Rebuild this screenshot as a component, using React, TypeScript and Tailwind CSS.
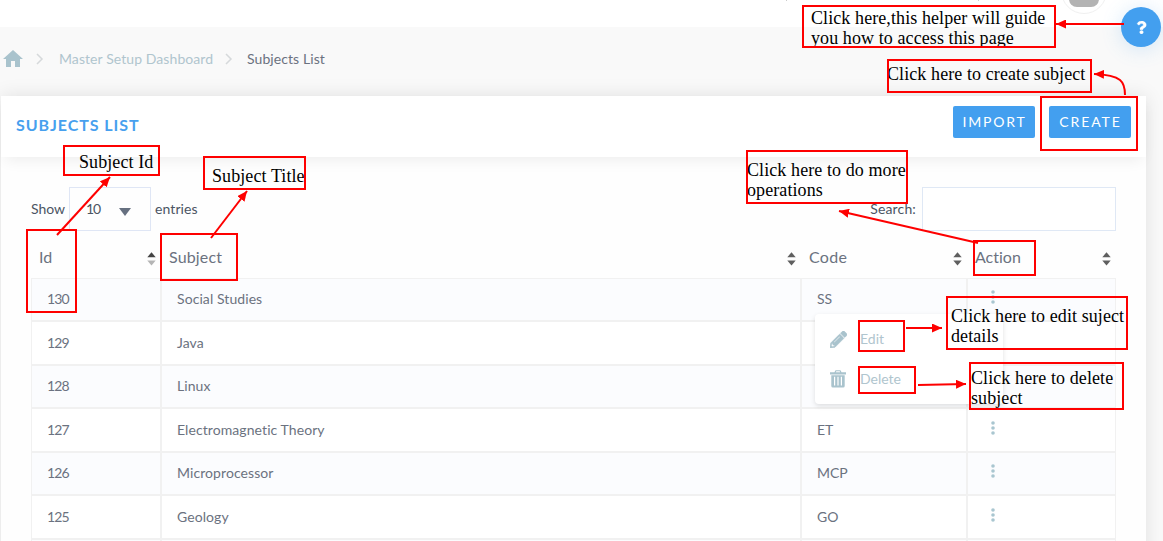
import React from "react";
import { MdHome } from "react-icons/md";
import { FaPencilAlt, FaQuestion } from "react-icons/fa";

type Subject = { id: string; title: string; code: string };

const subjects: Subject[] = [
  { id: "130", title: "Social Studies", code: "SS" },
  { id: "129", title: "Java", code: "" },
  { id: "128", title: "Linux", code: "" },
  { id: "127", title: "Electromagnetic Theory", code: "ET" },
  { id: "126", title: "Microprocessor", code: "MCP" },
  { id: "125", title: "Geology", code: "GO" },
  { id: "", title: "", code: "" },
];

const columns = "grid grid-cols-[130px_640px_166px_149px]";

function Chevron() {
  return (
    <svg width="8" height="12" viewBox="0 0 8 12" fill="none" stroke="#d6d9db" strokeWidth="1.5">
      <path d="M1 1l5 5-5 5" />
    </svg>
  );
}

function Sort({ up = "#5f5f5f", down = "#5f5f5f" }: { up?: string; down?: string }) {
  return (
    <svg width="9" height="14" viewBox="0 0 9 14" className="mt-[3px]">
      <path d="M0.300 5.200L4.500 0.300l4.200 4.900z" fill={up} />
      <path d="M0.300 8.600h8.400L4.500 13.500z" fill={down} />
    </svg>
  );
}

function Trash() {
  return (
    <svg width="16" height="18" viewBox="0 0 16 18" fill="#a9c3cd">
      <path d="M0 2.200h4.500L5.300.6Q5.600.2 6 .2h4q.4 0 .7.4l.8 1.600H16V4.500H0zM5.800 2.200h4.400l-.5-.9H6.300z" fillRule="evenodd" />
      <path
        d="M1.300 5.200h13.400V16q0 1.600-1.600 1.600H2.900Q1.300 17.600 1.300 16zM4 6.800v8.800h1.200V6.800zM7.400 6.800v8.800h1.200V6.800zM10.800 6.800v8.800H12V6.800z"
        fillRule="evenodd"
      />
    </svg>
  );
}

function Dots() {
  return (
    <svg width="4" height="14" viewBox="0 0 4 14" fill="#a9c6d0">
      <circle cx="2" cy="2" r="1.800" />
      <circle cx="2" cy="7" r="1.800" />
      <circle cx="2" cy="12" r="1.800" />
    </svg>
  );
}

function Note({ className, children }: { className: string; children?: React.ReactNode }) {
  return (
    <div
      className={`absolute overflow-hidden whitespace-nowrap border-2 border-[#fe0000] font-['Liberation_Serif',serif] text-[18px] leading-5 tracking-[0.09px] text-black ${className}`}
    >
      {children}
    </div>
  );
}

export default function App() {
  return (
    <div className="relative h-[541px] w-[1163px] overflow-hidden bg-[#f9f9f9] font-['Lato',sans-serif] text-sm text-[#6b7280] [font-variant-ligatures:none]">
      <header className="flex h-[27px] bg-white">
        <span className="ml-[786px] h-px w-px bg-[#cccccc]" />
        <span className="ml-[191px] h-px w-px bg-[#cccccc]" />
      </header>

      <nav className="flex h-[69px] items-center pb-[5px] tracking-[0.080px]">
        <MdHome className="ml-[1px] size-6 text-[#a9c3cd]" />
        <span className="ml-[11px]"><Chevron /></span>
        <span className="ml-[15px] w-[154px] whitespace-nowrap text-[#b0c5ce]">Master Setup Dashboard</span>
        <span className="ml-3"><Chevron /></span>
        <span className="ml-[14px] whitespace-nowrap">Subjects List</span>
      </nav>

      <main className="ml-px h-[460px] w-[1145px] bg-[#fefefe] shadow-[0_0_18px_rgba(0,0,0,0.1)]">
        <div className="flex h-[61px] items-start bg-white pl-[15px] pr-[15px] pt-[10px] shadow-[0_7px_14px_-4px_rgba(0,0,0,0.07)]">
          <h1 className="mt-[9px] flex-1 text-[16px] font-bold leading-5 tracking-[0.95px] text-[#47a0ee]">SUBJECTS LIST</h1>
          <button className="mr-[14px] h-8 w-[82px] rounded-[2px] bg-[#439fef] pb-px pl-px text-[14px] tracking-[1.8px] text-white">IMPORT</button>
          <button className="h-8 w-[82px] rounded-[2px] bg-[#439fef] pb-px pl-px text-[14px] tracking-[1.900px] text-white">CREATE</button>
        </div>

        <section className="pl-[30px] pr-[30px] pt-[30px]">
          <div className="flex h-11 items-center text-[#4b5563]">
            <span className="w-[38px] pb-px">Show</span>
            <div className="flex h-11 w-[82px] items-center border border-[#dfe6f5] pl-4">
              <span className="w-8 pb-px tracking-[-1.2px]">10</span>
              <svg width="12" height="8" viewBox="0 0 12 8" className="ml-px mt-[5px]">
                <path d="M0 0h12L6 8z" fill="#667080" />
              </svg>
            </div>
            <span className="ml-1 flex-1 pb-px tracking-[0.1px]">entries</span>
            <span className="mr-[6px] pb-px tracking-[0.15px]">Search:</span>
            <div className="h-11 w-[194px] border border-[#dfe8f5] bg-white" />
          </div>

          <div className={`${columns} h-[47px] text-[16px]`}>
            <div className="flex items-center justify-between pb-px pl-2 pr-[5px] pt-[7px]"><span>Id</span><Sort up="#444" down="#b5b5b5" /></div>
            <div className="flex items-center justify-between pb-px pl-2 pr-[5px] pt-[7px]"><span className="tracking-[0.15px]">Subject</span><Sort /></div>
            <div className="flex items-center justify-between pb-px pl-2 pr-[5px] pt-[7px]"><span className="tracking-[0.3px]">Code</span><Sort /></div>
            <div className="flex items-center justify-between pb-px pl-2 pr-[5px] pt-[7px]"><span>Action</span><Sort /></div>
          </div>

          {subjects.map((subject, index) => (
            <div
              key={index}
              className={`${columns} ${index % 2 === 0 ? "h-[43px] bg-[#fbfcfe]" : "h-11 bg-white"}`}
            >
              <div className="flex items-center border border-[#f1f1f1] pb-px pl-[15px] tracking-[-0.9px]">{subject.id}</div>
              <div className="flex items-center border border-[#f1f1f1] pb-px pl-[15px] tracking-[0.08px]">{subject.title}</div>
              <div className="flex items-center border border-[#f1f1f1] pb-px pl-[15px]">{subject.code}</div>
              <div className="flex items-center border border-[#f1f1f1] pb-[5px] pl-[23px]">{subject.id && <Dots />}</div>
            </div>
          ))}
        </section>
      </main>

      <div className="absolute left-[815px] top-[314px] h-[90px] w-[188px] rounded bg-white pt-[5px] text-[#b0c5ce] shadow-[0_2px_5px_rgba(0,0,0,0.12)]">
        <div className="flex h-10 items-center pl-[15px]">
          <FaPencilAlt className="size-[17px] text-[#a9c3cd]" stroke="#a9c3cd" strokeWidth="18" />
          <span className="ml-[13px] pb-px">Edit</span>
        </div>
        <div className="flex h-10 items-center pl-[15px]">
          <Trash />
          <span className="ml-[14px] pb-px">Delete</span>
        </div>
      </div>

      <div className="absolute left-[1061px] top-[-32px] size-[46px] rounded-full border border-[#f0f0f0] bg-white" />
      <div className="absolute left-[1069px] top-[-9px] h-4 w-[30px] rounded-[8px] bg-[#b3b3b3]" />
      <div className="absolute left-[1121px] top-[7px] flex size-10 items-center justify-center rounded-full bg-[#439fef] text-white shadow-[0_2px_20px_rgba(67,159,239,0.22)]">
        <FaQuestion className="size-[13px]" stroke="white" strokeWidth="14" />
      </div>

      <Note className="left-[802px] top-[5px] h-[43px] w-[254px] pl-[7px] pt-px">Click here,this helper will guide<br />you how to access this page</Note>
      <Note className="left-[887px] top-[59px] h-[34px] w-[205px] pt-[3px]"><span className="-ml-[2px]">Click here to create subject</span></Note>
      <Note className="left-[1040px] top-[96px] h-[55px] w-[98px]" />
      <Note className="left-[63px] top-[145px] h-[31px] w-[97px] pl-[14px] pt-[5px]">Subject Id</Note>
      <Note className="left-[203px] top-[156px] h-[34px] w-[103px] pl-[7px] pt-2">Subject Title</Note>
      <Note className="left-[746px] top-[150px] h-[54px] w-[162px] pt-2"><div className="-ml-px">Click here to do more<br />operations</div></Note>
      <Note className="left-[26px] top-[229px] h-[84px] w-[51px]" />
      <Note className="left-[160px] top-[233px] h-[48px] w-[78px]" />
      <Note className="left-[973px] top-[240px] h-[36px] w-[63px]" />
      <Note className="left-[946px] top-[296px] h-[54px] w-[182px] pl-[3px] pt-2">Click here to edit suject<br />details</Note>
      <Note className="left-[969px] top-[362px] h-[48px] w-[155px] pt-1">Click here to delete<br />subject</Note>
      <Note className="left-[858px] top-[320px] h-[32px] w-[47px]" />
      <Note className="left-[858px] top-[366px] h-[28px] w-[58px]" />

      <svg className="pointer-events-none absolute left-0 top-0" width="1163" height="541" fill="none" stroke="#fe0000" strokeWidth="2">
        <defs>
          <marker id="tip" viewBox="0 0 10 10" refX="10" refY="5" markerWidth="10" markerHeight="9" markerUnits="userSpaceOnUse" orient="auto" preserveAspectRatio="none">
            <path d="M0 0l10 5-10 5z" fill="#fe0000" stroke="none" />
          </marker>
        </defs>
        <path d="M1124 24H1056" markerEnd="url(#tip)" />
        <path d="M1125 95C1125 82 1122 75 1094 74" markerEnd="url(#tip)" />
        <path d="M57 235L110 177" markerEnd="url(#tip)" />
        <path d="M211 238L247 191" markerEnd="url(#tip)" />
        <path d="M978 243L839 211" markerEnd="url(#tip)" />
        <path d="M906 328H942" markerEnd="url(#tip)" />
        <path d="M918 385L966 384" markerEnd="url(#tip)" />
      </svg>
    </div>
  );
}
